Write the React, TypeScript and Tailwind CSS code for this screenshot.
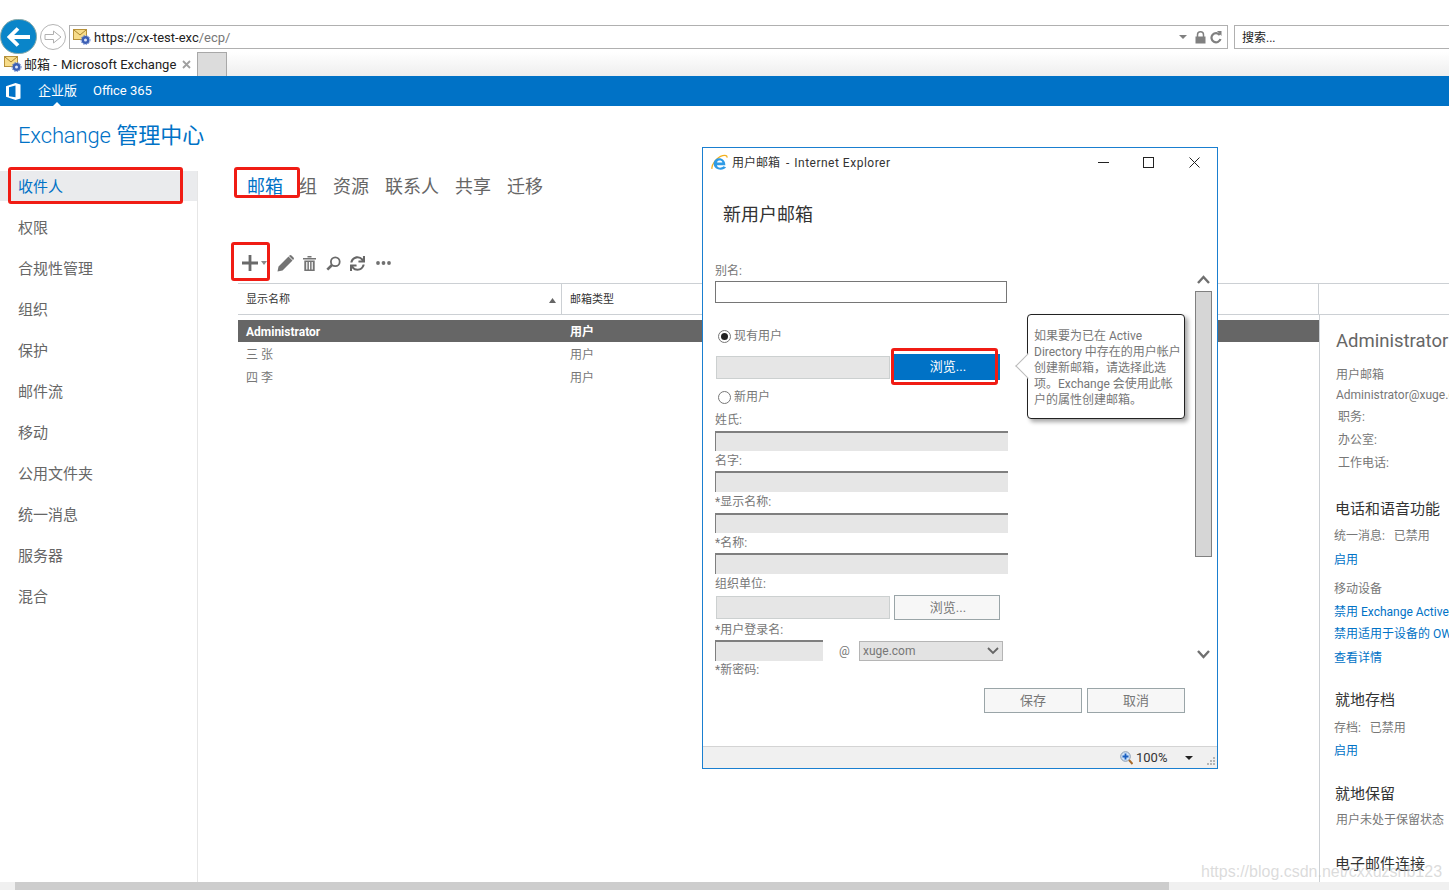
import React from "react";
import { FaSync } from "react-icons/fa";

const FONT = "font-['Roboto','Noto_Sans_CJK_SC',sans-serif]";

function MailIcon() {
  return (
    <svg width="18" height="16" viewBox="0 0 18 16" className="shrink-0">
      <rect x="0.5" y="0.5" width="13" height="10" fill="#f7dc8a" stroke="#b8923a" />
      <path d="M1 1l6 5 6-5" fill="none" stroke="#a8842f" />
      <circle cx="12.5" cy="11" r="4" fill="#3b5fb5" />
      <circle cx="12.5" cy="11" r="4.6" fill="none" stroke="#6f8bd0" strokeDasharray="1.5 1.2" />
      <circle cx="12.5" cy="11" r="1.5" fill="#dfe8fa" />
    </svg>
  );
}

function IeLogo() {
  return (
    <svg width="17" height="17" viewBox="0 0 16 16" className="shrink-0">
      <path d="M1 14C0 11 5 3 11 1.5c2.5-.6 4.5 0 4 2" fill="none" stroke="#f2b01e" strokeWidth="1.2" />
      <path d="M13.500 10.500H5.600c.2 2.600 4 3.200 6 1l2.600 1c-2.500 3.800-11.700 3-11.700-3.500 0-6.500 10.900-7.500 11 1.500zM5.700 8h5c-.3-2.400-4.700-2.400-5 0z" fill="#2e9be6" fillRule="evenodd" />
    </svg>
  );
}

function SideItem({ label, active }: { label: string; active?: boolean }) {
  return (
    <div className={`h-[30px] pl-[18px] pt-[2px] flex items-center text-[15px] ${active ? "bg-[#eaebed] text-[#0072c6]" : "text-[#666]"}`}>
      {label}
    </div>
  );
}

function RedBox({ className }: { className: string }) {
  return <div className={`absolute border-[3px] border-[#f01c14] rounded-[3px] pointer-events-none ${className}`} />;
}

function Label({ children, className = "" }: { children: React.ReactNode; className?: string }) {
  return <div className={`h-[14px] leading-[16px] text-[12px] text-[#777] ${className}`}>{children}</div>;
}

function GrayInput({ className }: { className: string }) {
  return (
    <input
      disabled
      className={`block bg-[#e6e6e6] border-t-2 border-l border-t-[#7f7f7f] border-l-[#7f7f7f] ${className}`}
    />
  );
}

function Radio({ on }: { on?: boolean }) {
  return (
    <span className="w-[13px] h-[13px] rounded-full border border-[#777] bg-white flex items-center justify-center shrink-0">
      {on && <span className="w-[7px] h-[7px] rounded-full bg-[#222]" />}
    </span>
  );
}

function Chevron({ up, className = "" }: { up?: boolean; className?: string }) {
  return (
    <svg width="13" height="10" viewBox="0 0 13 10" className={className}>
      <path d={up ? "M1 9l5.500-6 5.500 6" : "M1 1l5.500 6 5.500-6"} fill="none" stroke="#707070" strokeWidth="2.400" />
    </svg>
  );
}

function Link({ children, className = "" }: { children: React.ReactNode; className?: string }) {
  return <div className={`text-[12px] leading-[16px] text-[#0072c6] ${className}`}>{children}</div>;
}

function Gray({ children, className = "" }: { children: React.ReactNode; className?: string }) {
  return <div className={`text-[12px] leading-[16px] text-[#777] ${className}`}>{children}</div>;
}

function H3({ children, className = "" }: { children: React.ReactNode; className?: string }) {
  return <div className={`text-[15px] leading-[20px] text-[#333] ${className}`}>{children}</div>;
}

function Toolbar() {
  return (
    <div className="h-[24px] flex items-center text-[#707070]">
      <svg width="16" height="16" viewBox="0 0 16 16" className="ml-[4px]">
        <path d="M6.600 0h2.800v6.600H16v2.800H9.400V16H6.600V9.400H0V6.600h6.600z" fill="#6a6a6a" />
      </svg>
      <svg width="6" height="4" viewBox="0 0 6 4" className="ml-[3px]">
        <path d="M0 0h6L3 4z" fill="#8a8a8a" />
      </svg>
      <svg width="17" height="17" viewBox="0 0 17 17" className="ml-[10px]">
        <path d="M0.500 16.500l1-5L11.500 1.500 15.500 5.500 5.500 15.500zM12.500.500a1.500 1.500 0 0 1 2 0l2 2a1.500 1.500 0 0 1 0 2l-.5.500L12 1z" fill="#747474" />
      </svg>
      <svg width="13" height="15" viewBox="0 0 13 15" className="ml-[9px]">
        <path d="M0 2h13v1.400H0zM4.500 0h4v1.400h-4zM1.300 4.500h10.400V15H1.300zM3.200 6v7.500h1.200V6zM5.900 6v7.500h1.200V6zM8.600 6v7.500h1.200V6z" fill="#747474" fillRule="evenodd" />
      </svg>
      <svg width="15" height="15" viewBox="0 0 15 15" className="ml-[10px]">
        <circle cx="9.300" cy="5.700" r="4.400" fill="none" stroke="#6a6a6a" strokeWidth="1.800" />
        <path d="M6 9L1.300 13.700" stroke="#6a6a6a" strokeWidth="2.600" />
      </svg>
      <FaSync className="ml-[9px] w-[15px] h-[15px] text-[#666]" />
      <svg width="15" height="4" viewBox="0 0 15 4" className="ml-[11px]">
        <circle cx="2" cy="2" r="1.900" fill="#707070" />
        <circle cx="7.500" cy="2" r="1.900" fill="#707070" />
        <circle cx="13" cy="2" r="1.900" fill="#707070" />
      </svg>
    </div>
  );
}

function RightPanel() {
  return (
    <div className="w-[130px] shrink-0 border-l border-[#ccd0d4] pl-[16px] whitespace-nowrap overflow-hidden">
      <div className="text-[18.5px] leading-[26px] text-[#666] mt-[13px]">Administrator</div>
      <Gray className="mt-[13px]">用户邮箱</Gray>
      <Gray className="mt-[4px]">Administrator@xuge.com</Gray>
      <Gray className="mt-[6px] ml-[2px]">职务:</Gray>
      <Gray className="mt-[7px] ml-[2px]">办公室:</Gray>
      <Gray className="mt-[7px] ml-[2px]">工作电话:</Gray>
      <H3 className="mt-[28px] -ml-[1px]">电话和语音功能</H3>
      <Gray className="mt-[9px] -ml-[2px]">统一消息:&nbsp;&nbsp;&nbsp;已禁用</Gray>
      <Link className="mt-[8px] -ml-[2px]">启用</Link>
      <Gray className="mt-[13px] -ml-[2px]">移动设备</Gray>
      <Link className="mt-[7px] -ml-[2px]">禁用 Exchange ActiveSync</Link>
      <Link className="mt-[6px] -ml-[2px]">禁用适用于设备的 OWA</Link>
      <Link className="mt-[8px] -ml-[2px]">查看详情</Link>
      <H3 className="mt-[24px] -ml-[1px]">就地存档</H3>
      <Gray className="mt-[10px] -ml-[2px]">存档:&nbsp;&nbsp;&nbsp;已禁用</Gray>
      <Link className="mt-[7px] -ml-[2px]">启用</Link>
      <H3 className="mt-[25px] -ml-[1px]">就地保留</H3>
      <Gray className="mt-[8px]">用户未处于保留状态</Gray>
      <H3 className="mt-[26px] -ml-[1px]">电子邮件连接</H3>
    </div>
  );
}

function Modal() {
  return (
    <div className="absolute left-[702px] top-[147px] w-[516px] h-[622px] border border-[#1a7fd0] bg-white flex flex-col">
      <div className="h-[29px] shrink-0 flex items-center pl-[8px]">
        <IeLogo />
        <span className="ml-[4px] text-[12px] text-[#333] whitespace-nowrap">用户邮箱&nbsp;&nbsp;-&nbsp;&nbsp;<span className="tracking-[0.5px] ml-[-1px]">Internet Explorer</span></span>
        <div className="ml-auto flex items-center">
          <svg width="11" height="11" viewBox="0 0 11 11"><path d="M0 5.500h11" stroke="#222" /></svg>
          <svg width="11" height="11" viewBox="0 0 11 11" className="ml-[34px]"><rect x="0.500" y="0.500" width="10" height="10" fill="none" stroke="#222" /></svg>
          <svg width="11" height="11" viewBox="0 0 11 11" className="ml-[35px] mr-[17px]"><path d="M.500.500l10 10M10.500.500l-10 10" stroke="#222" /></svg>
        </div>
      </div>
      <div className="mt-[25px] h-[25px] leading-[25px] pl-[20px] text-[18px] text-[#333]">新用户邮箱</div>
      <div className="flex">
        <div className="relative w-[492px] pl-[12px] pr-[10px]">
          <Label className="mt-[36px]">别名:</Label>
          <input className="block mt-[4px] w-[292px] h-[22px] border border-[#767676] bg-white" />
          <div className="mt-[24px] h-[16px] pt-[2px] flex items-center pl-[3px] gap-[3px] text-[12px] text-[#777]"><Radio on />现有用户</div>
          <div className="mt-[11px] h-[26px] flex items-center pl-px">
            <input disabled className="block w-[174px] h-[23px] bg-[#e6e6e6] border border-[#ccd0d0]" />
            <div className="ml-[4px] w-[106px] h-[26px] bg-[#0072c6] flex items-center justify-center text-[13px] text-white pl-[2px]">浏览...</div>
          </div>
          <div className="mt-[8px] h-[16px] pt-[2px] flex items-center pl-[3px] gap-[3px] text-[12px] text-[#777]"><Radio />新用户</div>
          <Label className="mt-[8px]">姓氏:</Label>
          <GrayInput className="mt-[5px] w-[293px] h-[20px]" />
          <Label className="mt-[2px]">名字:</Label>
          <GrayInput className="mt-[4px] w-[293px] h-[21px]" />
          <Label className="mt-[2px]">*显示名称:</Label>
          <GrayInput className="mt-[5px] w-[293px] h-[20px]" />
          <Label className="mt-[2px]">*名称:</Label>
          <GrayInput className="mt-[4px] w-[293px] h-[21px]" />
          <Label className="mt-[2px]">组织单位:</Label>
          <div className="mt-[5px] h-[25px] flex items-center pl-px">
            <input disabled className="block w-[174px] h-[23px] bg-[#e6e6e6] border border-[#ccd0d0]" />
            <div className="ml-[4px] w-[106px] h-[25px] bg-[#f7f7f7] border border-[#9aa5a8] flex items-center justify-center text-[13px] text-[#777] pl-[2px]">浏览...</div>
          </div>
          <Label className="mt-[2px]">*用户登录名:</Label>
          <div className="mt-[4px] h-[21px] flex items-center">
            <GrayInput className="w-[108px] h-[21px]" />
            <span className="ml-[16px] w-[12px] text-[12px] text-[#777]">@</span>
            <div className="ml-[8px] w-[144px] h-[20px] bg-[#e3e3e3] border border-[#b5b5b5] flex items-center justify-between pl-[3px] pr-[3px] text-[12px] text-[#777]">
              xuge.com
              <svg width="12" height="8" viewBox="0 0 12 8"><path d="M1 1l5 5 5-5" fill="none" stroke="#666" strokeWidth="1.800" /></svg>
            </div>
          </div>
          <Label className="mt-px">*新密码:</Label>
          <div className="mt-[12px] flex justify-end gap-[5px]">
            <div className="w-[98px] h-[25px] bg-[#f7f7f7] border border-[#9aa5a8] flex items-center justify-center text-[13px] text-[#777]">保存</div>
            <div className="w-[98px] h-[25px] bg-[#f7f7f7] border border-[#9aa5a8] flex items-center justify-center text-[13px] text-[#777]">取消</div>
          </div>

          <div className="absolute left-[324px] top-[87px] w-[158px] h-[105px] bg-white border border-[#222] rounded-[4px] shadow-[3px_3px_4px_rgba(0,0,0,0.35)] pl-[6px] pt-[13px] text-[12px] leading-[16px] text-[#777] whitespace-nowrap">
            <div className="absolute -left-[9px] top-[42px] w-[18px] h-[18px] rotate-45 bg-white border-l border-b border-[#bbb]" />
            <div className="relative">
              如果要为已在 Active<br />
              Directory 中存在的用户帐户<br />
              创建新邮箱，请选择此选<br />
              项。Exchange 会使用此帐<br />
              户的属性创建邮箱。
            </div>
          </div>
        </div>
        <div className="w-[17px] flex flex-col items-center">
          <Chevron up className="mt-[47px]" />
          <div className="mt-[7px] w-[17px] h-[266px] bg-[#d6d6d6] border border-[#808080]" />
          <Chevron className="mt-[93px]" />
        </div>
      </div>
      <div className="mt-auto h-[22px] shrink-0 bg-[#f0f0f0] border-t border-[#d4d4d4] flex items-center justify-end text-[12px] text-[#333]">
        <svg width="13" height="14" viewBox="0 0 13 14">
          <circle cx="5.500" cy="5.500" r="4.800" fill="#cfe2f7" stroke="#8a9bb0" />
          <path d="M5.500 2.500v6M2.500 5.500h6" stroke="#1a5fc0" strokeWidth="1.800" />
          <path d="M9 9l3.500 4" stroke="#a86a2a" strokeWidth="2" />
        </svg>
        <span className="ml-[3px] w-[31px] text-[13px]">100%</span>
        <svg width="8" height="4" viewBox="0 0 8 4" className="ml-[18px]"><path d="M0 0h8L4 4z" fill="#222" /></svg>
        <svg width="8" height="8" viewBox="0 0 8 8" className="ml-[14px] mr-[2px] mt-[6px]">
          <path d="M6 0h2v2H6zM3 3h2v2H3zM6 3h2v2H6zM0 6h2v2H0zM3 6h2v2H3zM6 6h2v2H6z" fill="#b5b5b5" />
        </svg>
      </div>
    </div>
  );
}

export default function App() {
  return (
    <div className={`relative w-[1449px] h-[890px] overflow-hidden bg-white flex flex-col ${FONT}`}>
      {/* Browser chrome */}
      <div className="h-[52px] shrink-0 flex items-start pt-[25px] bg-white">
        <div className="-mt-[6px] ml-0 w-[37px] h-[35px] rounded-full bg-[#0a85c9] border border-[#8aa] flex items-center justify-center shrink-0 z-10">
          <svg width="24" height="20" viewBox="0 0 24 20">
            <path d="M11 1.500L2.500 10 11 18.500M3 10h20" fill="none" stroke="#fff" strokeWidth="3.800" />
          </svg>
        </div>
        <div className="-mt-px ml-[3px] w-[26px] h-[26px] rounded-full border border-[#b5b5b5] flex items-center justify-center shrink-0">
          <svg width="18" height="14" viewBox="0 0 18 14">
            <path d="M1 4.500h8.500V1L17 7l-7.500 6V9.500H1z" fill="#fff" stroke="#b0b0b0" />
          </svg>
        </div>
        <div className="ml-[3px] w-[1159px] h-[24px] border border-[#b0b0b0] flex items-center pl-[3px] shrink-0">
          <MailIcon />
          <span className="ml-[3px] pt-[2px] text-[13px] text-[#222]">https://cx-test-exc<span className="text-[#777]">/ecp/</span></span>
          <div className="ml-auto flex items-center mr-[5px]">
            <svg width="8" height="4" viewBox="0 0 8 4"><path d="M0 0h8L4 4z" fill="#808080" /></svg>
            <svg width="11" height="13" viewBox="0 0 11 13" className="ml-[8px]">
              <path d="M2.500 6V3.800a3 3 0 0 1 6 0V6" fill="none" stroke="#808080" strokeWidth="1.500" />
              <rect x="0.500" y="5.500" width="10" height="7" fill="#808080" />
            </svg>
            <svg width="12" height="13" viewBox="0 0 12 13" className="ml-[4px]">
              <path d="M9.800 4A4.600 4.600 0 1 0 10.500 8" fill="none" stroke="#808080" strokeWidth="2.200" />
              <path d="M7 0h4.500v5z" fill="#808080" />
            </svg>
          </div>
        </div>
        <div className="ml-[6px] flex-1 h-[24px] border border-[#b0b0b0] border-r-0 flex items-center pl-[7px] pt-[2px] text-[12px] text-[#222]">搜索...</div>
      </div>

      {/* Tab row */}
      <div className="h-[24px] shrink-0 flex bg-gradient-to-b from-white to-[#eeeeee]">
        <div className="w-[198px] bg-white border-r border-[#a8a8a8] flex items-center pl-[4px]">
          <MailIcon />
          <span className="ml-[2px] pt-[2px] text-[13px] text-[#222] whitespace-nowrap">邮箱&nbsp;-&nbsp;<span className="ml-px">Microsoft Exchange</span></span>
          <svg width="9" height="9" viewBox="0 0 9 9" className="ml-[6px]"><path d="M1 1l7 7M8 1L1 8" stroke="#a0a0a0" strokeWidth="1.800" /></svg>
        </div>
        <div className="w-[29px] bg-[#dcdcdc] border-r border-t border-[#a8a8a8]" />
      </div>

      {/* Blue bar */}
      <div className="relative h-[30px] shrink-0 bg-[#0072c6] flex items-center text-white text-[13px]">
        <svg width="15" height="17" viewBox="0 0 15 17" className="ml-[6px]">
          <path d="M9.500 0L0 3.200v10.600L9.500 17l5-1.500V1.500zM9.500 2.600v11.600L3 13.300V4.200z" fill="#fff" fillRule="evenodd" />
        </svg>
        <span className="ml-[17px]">企业版</span>
        <span className="ml-[16px]">Office 365</span>
        <div className="absolute left-[53px] bottom-0 w-0 h-0 border-x-[4px] border-x-transparent border-b-[4px] border-b-white" />
      </div>

      {/* Title */}
      <div className="h-[65px] shrink-0 pl-[18px] pt-[15px] text-[22px] leading-[30px] text-[#0072c6]"><span className="font-light tracking-[-0.15px]">Exchange</span> 管理中心</div>

      {/* Main */}
      <div className="flex-1 min-h-0 flex">
        <div className="w-[198px] shrink-0 border-r border-[#e6e6e6] flex flex-col gap-[11px]">
          <SideItem label="收件人" active />
          <SideItem label="权限" />
          <SideItem label="合规性管理" />
          <SideItem label="组织" />
          <SideItem label="保护" />
          <SideItem label="邮件流" />
          <SideItem label="移动" />
          <SideItem label="公用文件夹" />
          <SideItem label="统一消息" />
          <SideItem label="服务器" />
          <SideItem label="混合" />
        </div>
        <div className="flex-1 min-w-0 flex flex-col pl-[40px]">
          <div className="h-[30px] flex items-center gap-[16px] pl-[9px] text-[18px] text-[#666]">
            <span className="text-[#0072c6]">邮箱</span>
            <span>组</span>
            <span>资源</span>
            <span>联系人</span>
            <span>共享</span>
            <span>迁移</span>
          </div>
          <div className="mt-[50px]">
            <Toolbar />
          </div>
          <div className="mt-[8px] h-[32px] flex border-y border-[#ccd0d4] text-[11px] text-[#333]">
            <div className="w-[324px] shrink-0 border-r border-[#ccd0d4] pl-[8px] pr-[5px] pt-[2px] flex items-center justify-between">
              显示名称
              <svg width="7" height="5" viewBox="0 0 7 5"><path d="M0 5h7L3.500 0z" fill="#666" /></svg>
            </div>
            <div className="w-[757px] shrink-0 border-r border-[#ccd0d4] pl-[8px] pt-[2px] flex items-center">邮箱类型</div>
          </div>
          <div className="flex-1 min-h-0 flex">
            <div className="flex-1 min-w-0 pt-[5px] text-[12px]">
              <div className="h-[22px] pt-px bg-[#666] text-white font-bold flex items-center">
                <span className="w-[324px] pl-[8px]">Administrator</span>
                <span className="pl-[8px]">用户</span>
              </div>
              <div className="h-[23px] pt-[2px] text-[#777] flex items-center">
                <span className="w-[324px] pl-[8px]">三 张</span>
                <span className="pl-[8px]">用户</span>
              </div>
              <div className="h-[23px] pt-[2px] text-[#777] flex items-center">
                <span className="w-[324px] pl-[8px]">四 李</span>
                <span className="pl-[8px]">用户</span>
              </div>
            </div>
            <RightPanel />
          </div>
        </div>
      </div>

      {/* Page scrollbar */}
      <div className="h-[8px] shrink-0 bg-[#f0f0f0] flex">
        <div className="ml-[15px] w-[1154px] bg-[#cdcdcd]" />
      </div>

      <Modal />

      <RedBox className="left-[8px] top-[167px] w-[175px] h-[37px]" />
      <RedBox className="left-[234px] top-[167px] w-[66px] h-[31px]" />
      <RedBox className="left-[231px] top-[242px] w-[39px] h-[39px]" />
      <RedBox className="left-[891px] top-[348px] w-[107px] h-[37px]" />

      <div className="absolute left-[1201px] top-[863px] text-[16px] leading-[18px] whitespace-nowrap text-[#c4c4c4]/60 font-['Liberation_Sans',sans-serif]">
        https://blog.csdn.net/cxxuzshb123
      </div>
    </div>
  );
}
